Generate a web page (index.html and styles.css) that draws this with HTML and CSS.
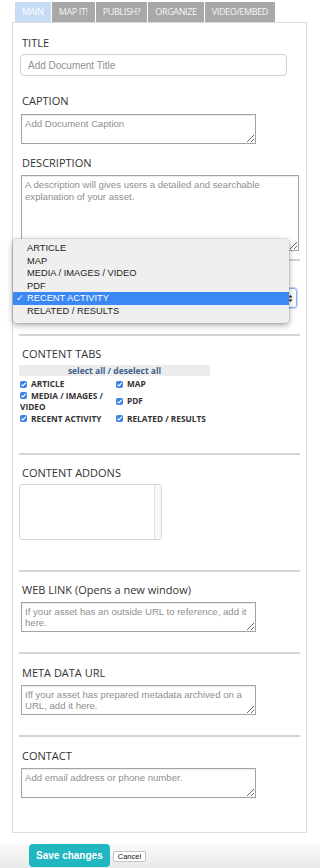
FILE: index.html
```html
<!DOCTYPE html>
<html lang="en">
<head>
    <meta charset="UTF-8">
    <meta name="viewport" content="width=device-width, initial-scale=1.0">
    <title>Edit Document</title>
    <link rel="stylesheet" href="styles.css">
</head>
<body>
    <!-- Tabs -->
    <ul class="tabs">
        <li class="tab active">MAIN</li>
        <li class="tab">MAP IT!</li>
        <li class="tab">PUBLISH?</li>
        <li class="tab">ORGANIZE</li>
        <li class="tab">VIDEO/EMBED</li>
    </ul>

    <div class="panel">
        <!-- Basic info -->
        <div class="section first">
            <label class="lbl lbl-title">TITLE</label>
            <input class="text-input" type="text" placeholder="Add Document Title">

            <label class="lbl lbl-caption">CAPTION</label>
            <textarea class="area area-short" placeholder="Add Document Caption"></textarea>

            <label class="lbl lbl-desc">DESCRIPTION</label>
            <textarea class="area area-desc" placeholder="A description will gives users a detailed and searchable explanation of your asset."></textarea>
        </div>

        <!-- Default tab (select is open, label hidden behind the list) -->
        <div class="section section-select">
            <div class="lbl-spacer"></div>
            <div class="fake-select">
                <svg class="arrows" width="5" height="9" viewBox="0 0 5 9">
                    <path d="M0.5 3.5 L2.5 1 L4.5 3.5 Z M0.5 5.5 L2.5 8 L4.5 5.5 Z" fill="#222"/>
                </svg>
            </div>

            <ul class="dropdown">
                <li>ARTICLE</li>
                <li>MAP</li>
                <li>MEDIA / IMAGES / VIDEO</li>
                <li>PDF</li>
                <li class="selected"><span class="tick">&#10003;</span>RECENT ACTIVITY</li>
                <li>RELATED / RESULTS</li>
            </ul>
        </div>

        <!-- Content tabs -->
        <div class="section section-tabs">
            <label class="lbl lbl-tight">CONTENT TABS</label>
            <div class="select-all">select all / deselect all</div>
            <div class="checks">
                <div class="check"><span class="cb"></span>ARTICLE</div>
                <div class="check"><span class="cb"></span>MAP</div>
                <div class="check"><span class="cb"></span>MEDIA / IMAGES / VIDEO</div>
                <div class="check"><span class="cb"></span>PDF</div>
                <div class="check"><span class="cb"></span>RECENT ACTIVITY</div>
                <div class="check"><span class="cb"></span>RELATED / RESULTS</div>
            </div>
        </div>

        <!-- Addons -->
        <div class="section section-addons">
            <label class="lbl lbl-tight">CONTENT ADDONS</label>
            <div class="addons">
                <div class="addons-list"></div>
                <div class="addons-track"></div>
            </div>
        </div>

        <div class="section section-link">
            <label class="lbl">WEB LINK (Opens a new window)</label>
            <textarea class="area area-short" placeholder="If your asset has an outside URL to reference, add it here."></textarea>
        </div>

        <div class="section">
            <label class="lbl">META DATA URL</label>
            <textarea class="area area-short" placeholder="Iff your asset has prepared metadata archived on a URL, add it here."></textarea>
        </div>

        <div class="section last">
            <label class="lbl">CONTACT</label>
            <textarea class="area area-short" placeholder="Add email address or phone number."></textarea>
        </div>
    </div>

    <!-- Buttons -->
    <div class="actions">
        <button class="btn-save">Save changes</button>
        <button class="btn-cancel">Cancel</button>
    </div>
</body>
</html>
```

FILE: styles.css
```css
/* Genel */
body {
    margin: 0;
    font-family: "Open Sans", Arial, sans-serif;
    color: #333;
    background: #fff;
}

/* Tabs */
.tabs {
    list-style: none;
    margin: 2px 0 0 15px;
    padding: 0;
    display: flex;
    gap: 1px;
}

.tab {
    height: 20px;
    line-height: 20px;
    padding: 0 7px;
    font-size: 9px;
    letter-spacing: -0.35px;
    color: #f4f4f4;
    background: #a8a8a8;
}

.tab.active {
    background: #c6dbf6;
    color: #fff;
}

/* Panel */
.panel {
    margin-left: 12px;
    width: 281px;
    padding: 0 6px;
    border: 1px solid #dcdcdc;
    border-top: none;
    box-shadow: inset 0 1px 0 #dcdcdc;
}

.section {
    position: relative;
    border-top: 2px solid #d4d4d4;
    padding: 12px 0 20px;
}

.section.first {
    border-top: none;
    padding-top: 14px;
    padding-bottom: 8px;
}

.section.last {
    padding-bottom: 34px;
}

.section-select {
    padding-top: 10px;
    padding-bottom: 26px;
}

.section-tabs {
    padding-top: 11px;
    padding-bottom: 28.5px;
}

.section-addons {
    padding-top: 11px;
    padding-bottom: 30px;
}

.section-link {
    padding-top: 11px;
}

.lbl {
    display: block;
    font-size: 11px;
    line-height: 14px;
    padding-left: 3px;
    margin-bottom: 5px;
    color: #333;
}

.lbl-title,
.lbl-tight {
    margin-bottom: 4px;
}

.lbl-spacer {
    height: 14px;
    margin-bottom: 3px;
}

.lbl-caption {
    margin-top: 18px;
    margin-bottom: 6px;
}

.lbl-desc {
    margin-top: 12px;
}

/* Inputs */
.text-input {
    display: block;
    box-sizing: border-box;
    margin-left: 1px;
    width: 267px;
    height: 22px;
    padding: 0 7px;
    border: 1px solid #cfcfcf;
    border-radius: 4px;
    font-family: "Liberation Sans", Arial, sans-serif;
    font-size: 10px;
}

.area {
    display: block;
    box-sizing: border-box;
    margin-left: 2px;
    padding: 3px 3px;
    border: 1px solid #a4a4a4;
    border-radius: 0;
    box-shadow: inset 0 1px 1px rgba(0, 0, 0, 0.08);
    font-family: "Liberation Sans", Arial, sans-serif;
    font-size: 9.6px;
    line-height: 11.5px;
}

.area-short {
    width: 235px;
    height: 30px;
}

.area-desc {
    width: 278px;
    height: 76px;
}

::placeholder {
    color: #8f8f8f;
}

/* Select */
.fake-select {
    box-sizing: border-box;
    margin-left: 1px;
    width: 277px;
    height: 20px;
    border: 1px solid #8ab4ee;
    border-radius: 3px;
    box-shadow: 0 0 0 1px #c4dbf8;
    display: flex;
    align-items: center;
    justify-content: flex-end;
    padding: 0 3px 0 6px;
}

.dropdown {
    position: absolute;
    top: -22px;
    left: -6px;
    width: 276px;
    margin: 0;
    padding: 3px 0 5px;
    list-style: none;
    background: #efefef;
    border-radius: 4px;
    box-shadow: 0 2px 6px rgba(0, 0, 0, 0.35), 0 0 0 1px rgba(0, 0, 0, 0.08);
    font-family: "Liberation Sans", Arial, sans-serif;
    font-size: 9.3px;
    color: #222;
}

.dropdown li {
    position: relative;
    height: 12.6px;
    line-height: 12.6px;
    padding-left: 14px;
}

.dropdown li.selected {
    background: #3a88f4;
    color: #fff;
}

.tick {
    position: absolute;
    left: 3px;
    font-size: 8.5px;
}

/* Content tabs */
.select-all {
    width: 191px;
    height: 11px;
    line-height: 11px;
    margin-bottom: 2px;
    background: #ececec;
    text-align: center;
    font-size: 8.5px;
    font-weight: bold;
    color: #3c5e8e;
}

.checks {
    display: grid;
    grid-template-columns: 96px 96px;
    align-items: center;
    margin-left: 1px;
}

.check {
    font-size: 8.3px;
    font-weight: bold;
    line-height: 11.5px;
    color: #333;
}

.cb {
    display: inline-block;
    width: 7px;
    height: 7px;
    margin-right: 4px;
    vertical-align: -0.5px;
    border-radius: 2px;
    background: #3b83e6 url("data:image/svg+xml,%3Csvg xmlns='http://www.w3.org/2000/svg' viewBox='0 0 7 7'%3E%3Cpath d='M1.5 3.6 L3 5 L5.6 1.9' fill='none' stroke='white' stroke-width='1.2'/%3E%3C/svg%3E") no-repeat center / 7px 7px;
}

/* Addons */
.addons {
    display: flex;
    width: 143px;
    height: 56px;
    box-sizing: border-box;
    border: 1px solid #d6d6d6;
    border-radius: 3px;
    overflow: hidden;
}

.addons-list {
    flex: 1;
}

.addons-track {
    width: 6px;
    background: #f8f8f8;
    border-left: 1px solid #e3e3e3;
}

/* Buttons */
.actions {
    margin-top: 10px;
    height: 25px;
    padding-left: 29px;
    display: flex;
    align-items: flex-start;
    gap: 3px;
    background: linear-gradient(#fbfbfb, #e9e9e9);
}

.btn-save {
    height: 23px;
    padding: 0 7px;
    border: none;
    border-radius: 4px;
    background: #21b7c0;
    color: #fff;
    font-family: "Liberation Sans", Arial, sans-serif;
    font-weight: bold;
    font-size: 10px;
    margin-top: 1px;
}

.btn-cancel {
    margin-top: 8px;
    height: 11px;
    padding: 0 4px;
    border: 1px solid #c4c4c4;
    border-radius: 2px;
    background: #fff;
    font-family: "Liberation Sans", Arial, sans-serif;
    font-size: 7.5px;
    line-height: 9px;
    color: #111;
}
```
